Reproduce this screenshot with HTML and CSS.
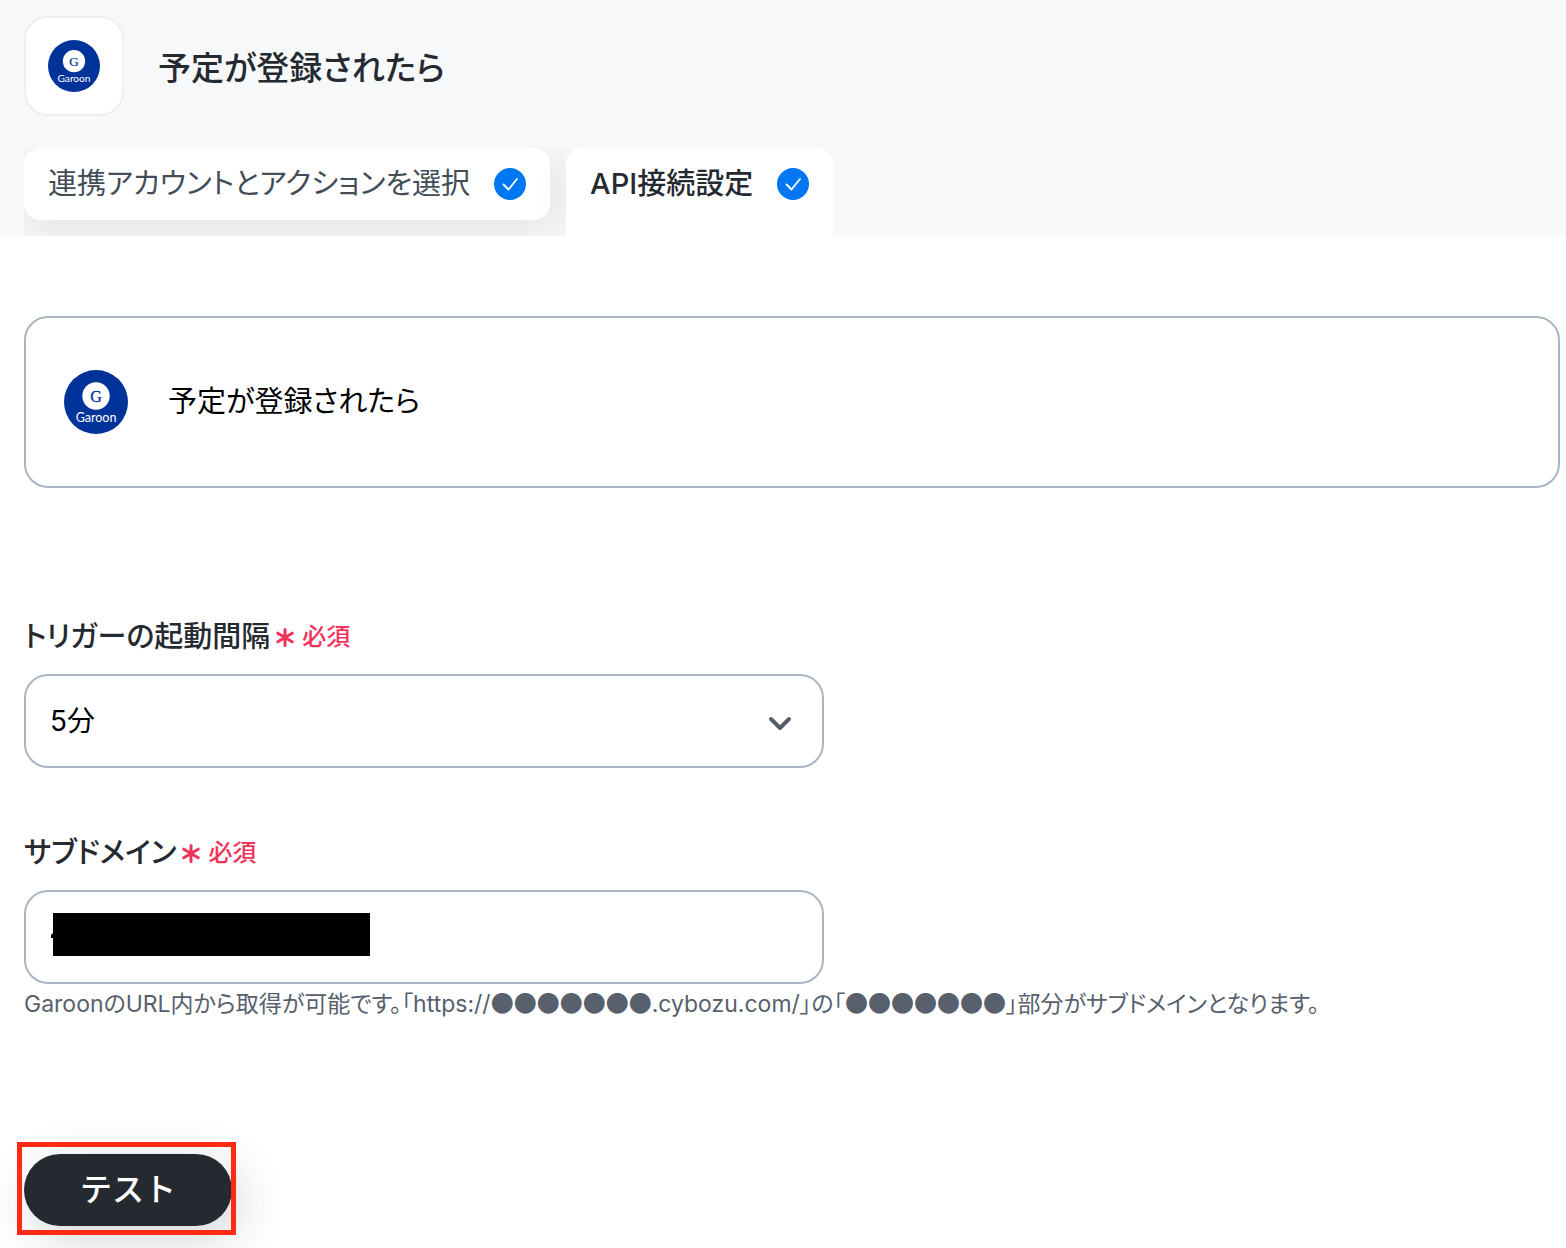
FILE: index.html
```html
<!DOCTYPE html>
<html lang="ja">
<head>
  <meta charset="UTF-8">
  <meta name="viewport" content="width=device-width, initial-scale=1.0">
  <title>予定が登録されたら</title>
  <link rel="stylesheet" href="styles.css">
</head>
<body>
  <header class="header">
    <div class="title-row">
      <div class="app-icon">
        <svg class="logo logo-small" viewBox="0 0 64 64" role="img" aria-label="Garoon">
          <circle cx="32" cy="32" r="32" fill="#003399"/>
          <circle cx="32" cy="26" r="13.7" fill="#fff"/>
          <text class="logo-letter" x="32" y="31.500" font-size="16" fill="#003399">G</text>
          <text class="logo-text" x="32" y="51.500" font-size="12.500" fill="#fff">Garoon</text>
        </svg>
      </div>
      <h1 class="title">予定が登録されたら</h1>
    </div>

    <nav class="tabs">
      <button type="button" class="tab">
        連携アカウントとアクションを選択
        <svg class="check" viewBox="0 0 32 32">
          <circle cx="16" cy="16" r="16" fill="#0077f2"/>
          <path d="M9.5 16.5l5 5L23 11" fill="none" stroke="#fff" stroke-width="1.8" stroke-linecap="round" stroke-linejoin="round"/>
        </svg>
      </button>
      <button type="button" class="tab active">
        API接続設定
        <svg class="check" viewBox="0 0 32 32">
          <circle cx="16" cy="16" r="16" fill="#0077f2"/>
          <path d="M9.5 16.5l5 5L23 11" fill="none" stroke="#fff" stroke-width="1.8" stroke-linecap="round" stroke-linejoin="round"/>
        </svg>
      </button>
    </nav>
  </header>

  <main class="main">
    <div class="action-card">
      <svg class="logo" viewBox="0 0 64 64" role="img" aria-label="Garoon">
        <circle cx="32" cy="32" r="32" fill="#003399"/>
        <circle cx="32" cy="26" r="13.7" fill="#fff"/>
        <text class="logo-letter" x="32" y="31.500" font-size="16" fill="#003399">G</text>
        <text class="logo-text" x="32" y="51.500" font-size="12.500" fill="#fff">Garoon</text>
      </svg>
      <span>予定が登録されたら</span>
    </div>

    <form>
      <div class="field">
        <label class="label" for="interval">
          トリガーの起動間隔
          <span class="required">
            <svg class="asterisk" viewBox="0 0 18 20"><path d="M9 2.500v16M1.800 6.200l14.400 8.600M16.200 6.200l-14.400 8.600"/></svg>
            必須
          </span>
        </label>
        <div class="control">
          <select class="input" id="interval">
            <option>5分</option>
          </select>
          <svg class="chevron" viewBox="0 0 24 16"><path d="M3 3l9 9 9-9"/></svg>
        </div>
      </div>

      <div class="field">
        <label class="label" for="subdomain">
          サブドメイン
          <span class="required">
            <svg class="asterisk" viewBox="0 0 18 20"><path d="M9 2.500v16M1.800 6.200l14.400 8.600M16.200 6.200l-14.400 8.600"/></svg>
            必須
          </span>
        </label>
        <div class="control">
          <input class="input" type="text" id="subdomain">
          <svg class="mask" viewBox="0 0 319 43"><path d="M2 0h317v43H2V25H0v-3l2-2z"/></svg>
        </div>
        <p class="help">GaroonのURL内から取得が可能です。「https://<span class="dots">●●●●●●●</span>.cybozu.com/」の「<span class="dots">●●●●●●●</span>」部分がサブドメインとなります。</p>
      </div>

      <div class="submit">
        <button type="button" class="test-button">テスト</button>
        <div class="highlight"></div>
      </div>
    </form>
  </main>
</body>
</html>
```

FILE: styles.css
```css
* {
  box-sizing: border-box;
}

body {
  margin: 0;
  background: #fff;
  color: #000;
  font-family: Inter, "Noto Sans CJK JP", sans-serif;
  font-size: 29px;
  line-height: 40px;
  font-feature-settings: "palt";
}

button,
input,
select {
  font: inherit;
  font-feature-settings: inherit;
}

.header {
  padding: 16px 24px 0;
  background: #f7f8fa;
}

.title-row {
  display: flex;
  align-items: center;
  gap: 34px;
  margin-bottom: 32px;
}

.app-icon {
  display: flex;
  align-items: center;
  justify-content: center;
  width: 100px;
  height: 100px;
  border: 2px solid #edf0f3;
  border-radius: 24px;
  background: #fff;
}

.logo {
  width: 64px;
  height: 64px;
}

.logo-small {
  width: 52px;
  height: 52px;
}

.logo-letter {
  font-family: "Liberation Serif", serif;
  stroke: #003399;
  stroke-width: 0.3;
  text-anchor: middle;
}

.logo-text {
  font-family: Lato, sans-serif;
  text-anchor: middle;
}

.title {
  margin: 0;
  padding-top: 4px;
  color: #252a31;
  font-size: 33px;
  font-weight: 500;
}

/* overflow clips the tab shadows */
.tabs {
  display: flex;
  align-items: flex-start;
  gap: 16px;
  width: fit-content;
  overflow: hidden;
}

.tab {
  display: flex;
  align-items: center;
  gap: 24px;
  height: 72px;
  margin-bottom: 16px;
  padding: 0 24px;
  border: 0;
  border-radius: 16px;
  background: #fff;
  color: #434d58;
  box-shadow: 0 8px 48px rgba(0, 0, 0, 0.1);
  cursor: pointer;
}

.tab.active {
  height: 88px;
  margin-bottom: 0;
  padding-bottom: 16px;
  border-radius: 16px 16px 0 0;
  color: #252a31;
  font-weight: 500;
  box-shadow: 0 8px 48px rgba(0, 0, 0, 0.03);
}

.check {
  width: 32px;
  height: 32px;
}

.main {
  padding: 80px 6px 22px 24px;
}

.action-card {
  display: flex;
  align-items: center;
  gap: 40px;
  height: 172px;
  margin-bottom: 128px;
  padding: 0 38px;
  border: 2px solid #abb5c1;
  border-radius: 24px;
}

.field {
  margin-bottom: 64px;
}

.label {
  display: flex;
  align-items: center;
  gap: 6px;
  height: 42px;
  margin-bottom: 16px;
  color: #252a31;
  font-weight: 500;
}

.required {
  display: flex;
  align-items: center;
  gap: 8px;
  color: #f0325a;
  font-size: 24px;
}

.asterisk {
  width: 18px;
  height: 20px;
  fill: none;
  stroke: #f0325a;
  stroke-width: 3;
  stroke-linecap: round;
}

.control {
  position: relative;
  max-width: 800px;
}

.input {
  display: block;
  width: 100%;
  height: 94px;
  padding: 0 24px;
  border: 2px solid #abb5c1;
  border-radius: 24px;
  background: #fff;
  color: #000;
  font-size: 28px;
  appearance: none;
}

.chevron {
  position: absolute;
  top: 42px;
  right: 32px;
  width: 24px;
  height: 16px;
  fill: none;
  stroke: #545e6a;
  stroke-width: 4;
  stroke-linecap: round;
  stroke-linejoin: round;
  pointer-events: none;
}

.mask {
  position: absolute;
  top: 23px;
  left: 27px;
  width: 319px;
  height: 43px;
}

.help {
  margin: 0;
  color: #57606c;
  font-size: 23px;
}

.dots {
  font-family: "Noto Sans CJK JP", sans-serif;
  line-height: 1;
}

.submit {
  position: relative;
  width: fit-content;
  margin-top: 130px;
}

.test-button {
  display: block;
  width: 208px;
  height: 72px;
  border: 0;
  border-radius: 36px;
  background: #252a31;
  color: #fff;
  font-size: 32px;
  font-weight: 500;
  font-feature-settings: normal;
  box-shadow: 8px 12px 48px rgba(37, 42, 49, 0.2);
  cursor: pointer;
}

.highlight {
  position: absolute;
  top: -12px;
  left: -7px;
  width: 219px;
  height: 93px;
  border: 5px solid #ff2a14;
  pointer-events: none;
}
```
